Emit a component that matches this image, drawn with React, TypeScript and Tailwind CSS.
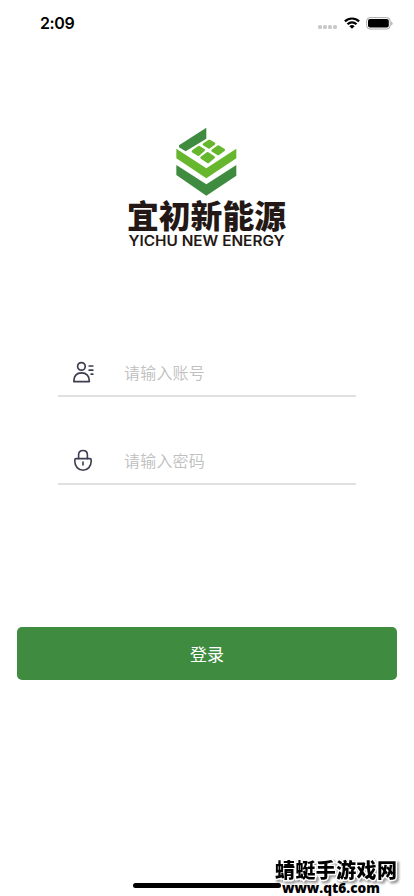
import type { ReactNode } from 'react';

const StatusBar = () => (
  <header className="flex h-[46px] items-center justify-between pl-10 pr-[21px]">
    <span className="font-['Inter'] text-[16px] font-semibold leading-none tracking-[-0.4px] text-black">2:09</span>
    <div className="flex items-center">
      <div className="mr-[7px] mt-[8px] flex gap-[1px]">
        {[0, 1, 2, 3].map(dot => (
          <i key={dot} className="h-1 w-1 rounded-[1.5px] bg-[#c9c9c9]" />
        ))}
      </div>
      <svg width="16" height="12" viewBox="0 0 16 12" className="mr-[6px]">
        <g fill="none" stroke="#000" strokeWidth="2.2">
          <path d="M.9 4.4a10.2 10.2 0 0 1 14.2 0" />
          <path d="M3.5 7.2a6.5 6.5 0 0 1 9 0" />
        </g>
        <path d="M8 11.8 5.4 9.3a3.7 3.7 0 0 1 5.2 0z" />
      </svg>
      <svg width="27" height="13" viewBox="0 0 27 13">
        <rect x=".6" y=".6" width="23.6" height="11.4" rx="3.4" fill="none" stroke="#aaa" />
        <rect x="2" y="2" width="20.8" height="8.6" rx="2" />
        <path d="M25.3 4.4c1.6.8 1.6 3.4 0 4.2z" fill="#999" />
      </svg>
    </div>
  </header>
);

const Logo = () => (
  <div className="mt-[81px] flex flex-col items-center">
    <svg width="62" height="70" viewBox="48 36 186 210">
      <path fill="#3f8b3f" d="M139 38V71L77 109L57 97V91Z" />
      <path fill="#67b72e" d="M49 101L139 160L229 101V130L139 190L49 130Z" />
      <path fill="#3f8b3f" d="M49 150L139 208L229 150V182L139 242L49 180Z" />
      <g fill="#67b72e" stroke="#67b72e" strokeWidth="8" strokeLinejoin="round">
        <path d="M148 78L162 86L147 97L132 88Z" />
        <path d="M117 96L131 105L115 119L99 109Z" />
        <path d="M175 95L191 105L175 117L158 107Z" />
        <path d="M143 115L161 127L144 141L125 128Z" />
      </g>
    </svg>
    <svg width="160" height="50" viewBox="0 0 160 50" className="mt-[1px] overflow-visible" fill="#231815">
      <text x="0" y="30.2" fontSize="32" fontWeight="900" textLength="159" lengthAdjust="spacingAndGlyphs" className="font-['Noto_Sans_CJK_SC',sans-serif]">宜初新能源</text>
      <text x="1.5" y="48" fontSize="13.8" fontWeight="600" textLength="156" lengthAdjust="spacingAndGlyphs" className="font-['Inter',sans-serif]">YICHU NEW ENERGY</text>
    </svg>
  </div>
);

const UserIcon = () => (
  <svg width="22" height="22" viewBox="0 0 22 22" fill="none" stroke="#3d3d50" strokeWidth="1.7" strokeLinecap="round" strokeLinejoin="round">
    <circle cx="8.4" cy="5.4" r="3.8" />
    <path d="M.9 20.7C.6 14.8 3.6 11.9 8.5 11.9s8.1 2.9 7.8 8.8Z" />
    <path d="M16.2 5h3.6M16.2 9.2h3.6M18.2 13.2h1.6" />
  </svg>
);

const LockIcon = () => (
  <svg width="22" height="22" viewBox="0 0 22 22" fill="none" stroke="#3d3d50" strokeWidth="1.6" strokeLinecap="round" strokeLinejoin="round">
    <path d="M5.6 9.6V5.8C5.6 3.2 7.2 1.5 10 1.5s4.4 1.7 4.4 4.3v3.8" />
    <path d="M3.1 9.6h13.8c.9 0 1.3.6 1.3 1.5v1.2c0 5-3.4 8.9-8.2 8.9s-8.2-3.9-8.2-8.9v-1.2c0-.9.4-1.5 1.3-1.5Z" />
    <path d="M10 13v3" />
  </svg>
);

interface FieldProps {
  icon: ReactNode;
  type: string;
  placeholder: string;
}

const Field = ({ icon, type, placeholder }: FieldProps) => (
  <label className="flex h-[48px] items-center border-b-2 border-[#dfe0e0] pl-[15px]">
    {icon}
    <input
      type={type}
      placeholder={placeholder}
      className="ml-[29px] w-[200px] font-['Noto_Sans_CJK_SC',sans-serif] text-[16px] font-[350] tracking-[0.2px] outline-none placeholder:text-[#c0c0c0]"
    />
  </label>
);

export default function App() {
  return (
    <div className="relative flex h-[896px] w-full flex-col overflow-hidden bg-white">
      <StatusBar />
      <Logo />
      <form className="mt-[101px] flex flex-col">
        <div className="ml-[58px] flex w-[298px] flex-col gap-10">
          <Field icon={<UserIcon />} type="text" placeholder="请输入账号" />
          <Field icon={<LockIcon />} type="password" placeholder="请输入密码" />
        </div>
        <button type="button" className="ml-[17px] mr-[17px] mt-[142px] h-[53px] rounded-[5px] bg-[#3f8b3f] font-['Noto_Sans_CJK_SC',sans-serif] text-[17px] text-white">
          登录
        </button>
      </form>
      <div className="mb-[8px] ml-[133px] mt-auto h-[5px] w-[148px] rounded-full bg-black" />
      <svg width="140" height="38" viewBox="0 0 140 38" className="absolute bottom-0 right-0 overflow-visible">
        <g className="drop-shadow-[2px_2px_1px_rgba(0,0,0,0.4)]">
          <text x="1" y="19.5" fontSize="20" fontWeight="900" textLength="122" stroke="#fff" strokeWidth="3" paintOrder="stroke" className="font-['Noto_Sans_CJK_SC',sans-serif]">蜻蜓手游戏网</text>
        </g>
        <text x="8" y="35" fontSize="13.5" fontWeight="800" textLength="98" lengthAdjust="spacingAndGlyphs" className="font-['Open_Sans',sans-serif]">www.qt6.com</text>
      </svg>
    </div>
  );
}
